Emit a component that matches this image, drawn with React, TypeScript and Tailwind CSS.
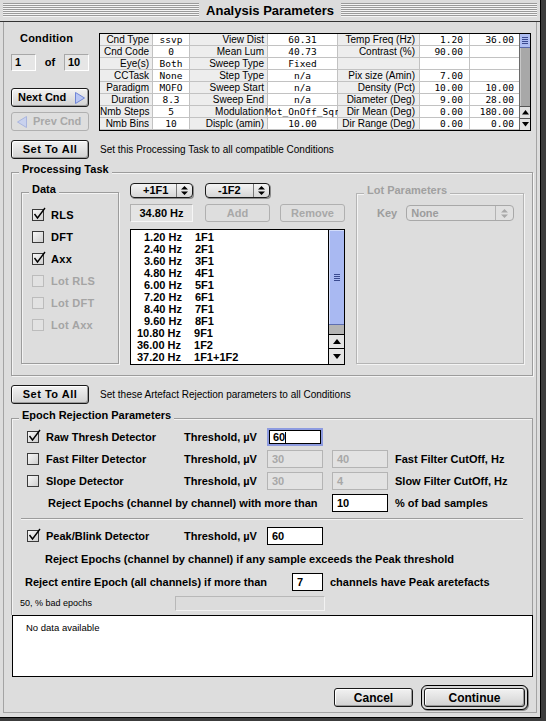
import React from "react";

type Row = [string, string, string, string, string, string, string];
const rows: Row[] = [
  ["Cnd Type", "ssvp", "View Dist", "60.31", "Temp Freq (Hz)", "1.20", "36.00"],
  ["Cnd Code", "0", "Mean Lum", "40.73", "Contrast (%)", "90.00", ""],
  ["Eye(s)", "Both", "Sweep Type", "Fixed", "", "", ""],
  ["CCTask", "None", "Step Type", "n/a", "Pix size (Amin)", "7.00", ""],
  ["Paradigm", "MOFO", "Sweep Start", "n/a", "Density (Pct)", "10.00", "10.00"],
  ["Duration", "8.3", "Sweep End", "n/a", "Diameter (Deg)", "9.00", "28.00"],
  ["Nmb Steps", "5", "Modulation", "Mot_OnOff_Sqr", "Dir Mean (Deg)", "0.00", "180.00"],
  ["Nmb Bins", "10", "Displc (amin)", "10.00", "Dir Range (Deg)", "0.00", "0.00"],
];

const freqs: [string, string, boolean][] = [
  ["1.20 Hz", "1F1", false],
  ["2.40 Hz", "2F1", false],
  ["3.60 Hz", "3F1", false],
  ["4.80 Hz", "4F1", false],
  ["6.00 Hz", "5F1", false],
  ["7.20 Hz", "6F1", false],
  ["8.40 Hz", "7F1", false],
  ["9.60 Hz", "8F1", false],
  ["10.80 Hz", "9F1", true],
  ["36.00 Hz", "1F2", true],
  ["37.20 Hz", "1F1+1F2", true],
];

const btn =
  "border border-[#1a1a1a] rounded-[3px] bg-[linear-gradient(#f2f2f2,#d2d2d2)] shadow-[inset_1px_1px_0_#ffffff,inset_-1px_-1px_0_#9a9a9a] flex items-center justify-center font-bold text-[11px]";
const btnDis =
  "border border-[#b0b0b0] rounded-[3px] bg-[#dedede] flex items-center justify-center font-bold text-[11px] text-[#a8a8a8]";

function Check({ checked, disabled }: { checked?: boolean; disabled?: boolean }) {
  return (
    <div
      className={
        "relative w-[12px] h-[12px] shrink-0 border " +
        (disabled
          ? "border-[#bcbcbc] bg-[#e2e2e2]"
          : "border-[#3a3a3a] bg-[linear-gradient(135deg,#f8f8f8,#cfcfcf)]")
      }
    >
      {checked && (
        <svg className="absolute left-0 top-[-3px] overflow-visible" width="13" height="13" viewBox="0 0 13 13">
          <path d="M1.5 7 L4.5 11 L12 1" stroke="#000" strokeWidth="1.4" fill="none" />
        </svg>
      )}
    </div>
  );
}

function UpDown({ color }: { color: string }) {
  return (
    <svg width="7" height="9" viewBox="0 0 7 9">
      <path d="M3.5 0 L7 3.5 H0 Z M0 5.5 H7 L3.5 9 Z" fill={color} />
    </svg>
  );
}

function Arrow({ up, size }: { up?: boolean; size: number }) {
  return (
    <svg width={size} height={size / 2 + 1} viewBox="0 0 8 5">
      {up ? <path d="M4 0 L8 5 H0 Z" fill="#000" /> : <path d="M0 0 H8 L4 5 Z" fill="#000" />}
    </svg>
  );
}

function Grip() {
  return (
    <div className="flex flex-col gap-[1px]">
      <div className="w-[6px] h-[1px] bg-[#3a4a90]" />
      <div className="w-[6px] h-[1px] bg-[#3a4a90]" />
      <div className="w-[6px] h-[1px] bg-[#3a4a90]" />
      <div className="w-[6px] h-[1px] bg-[#3a4a90]" />
    </div>
  );
}

function Legend({ text, gray }: { text: string; gray?: boolean }) {
  return (
    <span
      className={
        "absolute left-[7px] top-[-10px] px-[3px] bg-[#dddddd] font-bold text-[11px] leading-[12px] " +
        (gray ? "text-[#a0a0a0]" : "text-black")
      }
    >
      {text}
    </span>
  );
}

export default function App() {
  return (
    <div className="w-[546px] h-[721px] bg-[#3c3c3c] overflow-hidden font-['Liberation_Sans',Arial,sans-serif] text-black">
      <div className="w-[541px] h-[718px] bg-[#dddddd] border-r border-b border-black flex flex-col">
        {/* Title bar */}
        <div className="h-[22px] shrink-0 border-b border-[#333333] flex items-start pt-[3px] px-[3px] bg-[#dcdcdc]">
          <div className="flex-1 h-[14px] bg-[repeating-linear-gradient(to_bottom,#9a9a9a_0px,#9a9a9a_1px,#f4f4f4_1px,#f4f4f4_2px)]" />
          <div className="px-[7px] font-bold text-[13px] leading-[15px]">Analysis Parameters</div>
          <div className="flex-1 h-[14px] bg-[repeating-linear-gradient(to_bottom,#9a9a9a_0px,#9a9a9a_1px,#f4f4f4_1px,#f4f4f4_2px)]" />
        </div>

        {/* Panel */}
        <div className="ml-[3px] w-[534px] h-[691px] border-l border-r border-b border-[#a4a4a4] pl-[7px] flex flex-col">
          {/* Top section */}
          <div className="mt-[11px] flex items-start">
            <div className="w-[78px] flex flex-col">
              <div className="pl-[9px] font-bold text-[11px] leading-[10px] tracking-[0.2px]">Condition</div>
              <div className="mt-[11px] h-[17px] flex items-center">
                <div className="w-[25px] h-[17px] bg-[#e6e6e6] border border-t-[#a8a8a8] border-l-[#a8a8a8] border-r-white border-b-white pl-[3px] font-bold text-[11px] leading-[15px]">
                  1
                </div>
                <div className="flex-1 text-center font-bold text-[11px]">of</div>
                <div className="w-[25px] h-[17px] bg-[#e6e6e6] border border-t-[#a8a8a8] border-l-[#a8a8a8] border-r-white border-b-white pl-[3px] font-bold text-[11px] leading-[15px]">
                  10
                </div>
              </div>
              <div className={"mt-[17px] h-[19px] " + btn + " !justify-start pl-[6px]"}>
                <span>Next Cnd</span>
                <svg className="ml-[9px]" width="10" height="12" viewBox="0 0 10 12">
                  <path d="M0.5 0.5 L9.5 6 L0.5 11.5 Z" fill="#b8c6f4" stroke="#7086d6" strokeWidth="1" />
                </svg>
              </div>
              <div className={"mt-[5px] h-[19px] " + btnDis + " !justify-start pl-[5px]"}>
                <svg width="10" height="12" viewBox="0 0 10 12">
                  <path d="M9.5 0.5 L0.5 6 L9.5 11.5 Z" fill="#c9d2ee" stroke="#a9b5de" strokeWidth="1" />
                </svg>
                <span className="ml-[6px]">Prev Cnd</span>
              </div>
            </div>

            {/* Parameter table */}
            <div className="ml-[10px] w-[432px] border border-black flex bg-white">
              <div className="w-[419px] grid grid-cols-[53px_37px_78px_70px_82px_50px_49px] auto-rows-[12px]">
                {rows.map((r, i) => (
                  <React.Fragment key={i}>
                    <div className="h-[12px] bg-[#ededed] border-r border-b border-[#c2c2c2] text-[10px] leading-[11px] text-right pr-[3px] whitespace-nowrap">
                      {r[0]}
                    </div>
                    <div className="h-[12px] bg-white border-r border-b border-[#c2c2c2] font-['DejaVu_Sans_Mono',monospace] text-[9.5px] leading-[11px] flex justify-center whitespace-nowrap">
                      {r[1]}
                    </div>
                    <div className="h-[12px] bg-[#ededed] border-r border-b border-[#c2c2c2] text-[10px] leading-[11px] text-right pr-[3px] whitespace-nowrap">
                      {r[2]}
                    </div>
                    <div className="h-[12px] bg-white border-r border-b border-[#c2c2c2] font-['DejaVu_Sans_Mono',monospace] text-[9.5px] leading-[11px] flex justify-center whitespace-nowrap">
                      {r[3]}
                    </div>
                    <div className="h-[12px] bg-[#ededed] border-r border-b border-[#c2c2c2] text-[10px] leading-[11px] text-right pr-[4px] whitespace-nowrap">
                      {r[4]}
                    </div>
                    <div className="h-[12px] bg-white border-r border-b border-[#c2c2c2] font-['DejaVu_Sans_Mono',monospace] text-[9.5px] leading-[11px] text-right pr-[6px] whitespace-nowrap">
                      {r[5]}
                    </div>
                    <div className="h-[12px] bg-white border-b border-[#c2c2c2] font-['DejaVu_Sans_Mono',monospace] text-[9.5px] leading-[11px] text-right pr-[5px] whitespace-nowrap">
                      {r[6]}
                    </div>
                  </React.Fragment>
                ))}
              </div>
              <div className="w-[11px] border-l border-[#6a6a6a] flex flex-col">
                <div className="h-[14px] bg-[#aebdf2] border-b border-[#5868a8] flex items-center justify-center">
                  <Grip />
                </div>
                <div className="flex-1 bg-[#a8a8a8] border-l border-[#c8c8c8]" />
                <div className="h-[12px] bg-[#e2e2e2] border-t border-[#555555] flex items-center justify-center">
                  <Arrow up size={7} />
                </div>
                <div className="h-[12px] bg-[#e2e2e2] border-t border-[#555555] flex items-center justify-center">
                  <Arrow size={7} />
                </div>
              </div>
            </div>
          </div>

          {/* Set To All 1 */}
          <div className="mt-[9px] flex items-center">
            <div className={"w-[78px] h-[19px] tracking-[0.5px] " + btn}>Set To All</div>
            <div className="ml-[11px] text-[10px]">Set this Processing Task to all compatible Conditions</div>
          </div>

          {/* Processing Task group */}
          <div className="relative mt-[13px] w-[522px] h-[204px] border border-[#9c9c9c] shadow-[1px_1px_0_#f4f4f4,inset_1px_1px_0_#f4f4f4]">
            <Legend text="Processing Task" />
            <div className="flex items-start pt-[10px] pl-[9px]">
              {/* Data */}
              <div className="relative mt-[9px] w-[98px] h-[172px] border border-[#9c9c9c] shadow-[1px_1px_0_#f4f4f4,inset_1px_1px_0_#f4f4f4]">
                <Legend text="Data" />
                <div className="pt-[16px] pl-[10px] flex flex-col gap-[10px]">
                  {[
                    ["RLS", true, false],
                    ["DFT", false, false],
                    ["Axx", true, false],
                    ["Lot RLS", false, true],
                    ["Lot DFT", false, true],
                    ["Lot Axx", false, true],
                  ].map(([t, c, d]) => (
                    <div key={t as string} className="h-[12px] flex items-center gap-[7px]">
                      <Check checked={c as boolean} disabled={d as boolean} />
                      <span className={"font-bold text-[11px] tracking-[0.3px] " + (d ? "text-[#a4a4a4]" : "text-black")}>{t as string}</span>
                    </div>
                  ))}
                </div>
              </div>

              {/* Middle */}
              <div className="ml-[11px] w-[215px] flex flex-col">
                <div className="h-[15px] flex gap-[12px]">
                  <div className="w-[63px] h-[15px] flex items-center border border-[#1a1a1a] rounded-[4px] bg-[linear-gradient(#f4f4f4,#d6d6d6)] shadow-[1px_1px_0_#8a8a8a]">
                    <span className="flex-1 pl-[12px] font-bold text-[11px] leading-[13px]">+1F1</span>
                    <div className="w-[16px] h-full border-l border-[#777777] flex items-center justify-center">
                      <UpDown color="#000" />
                    </div>
                  </div>
                  <div className="w-[65px] h-[15px] flex items-center border border-[#1a1a1a] rounded-[4px] bg-[linear-gradient(#f4f4f4,#d6d6d6)] shadow-[1px_1px_0_#8a8a8a]">
                    <span className="flex-1 pl-[12px] font-bold text-[11px] leading-[13px]">-1F2</span>
                    <div className="w-[16px] h-full border-l border-[#777777] flex items-center justify-center">
                      <UpDown color="#000" />
                    </div>
                  </div>
                </div>
                <div className="mt-[6px] h-[18px] flex">
                  <div className="w-[63px] h-[18px] bg-[#e4e4e4] border border-t-[#b0b0b0] border-l-[#b0b0b0] border-r-[#f6f6f6] border-b-[#f6f6f6] flex items-center justify-center font-bold text-[11px]">
                    34.80 Hz
                  </div>
                  <div className={"ml-[12px] w-[65px] h-[18px] " + btnDis}>Add</div>
                  <div className={"ml-[10px] w-[65px] h-[18px] " + btnDis}>Remove</div>
                </div>
                <div className="mt-[7px] h-[136px] border border-black bg-white flex">
                  <div className="flex-1 pt-[1px]">
                    {freqs.map(([hz, f, long]) => (
                      <div key={f} className="h-[12px] flex items-center font-bold text-[11px] leading-[12px] whitespace-nowrap">
                        <span className={long ? "pl-[6px]" : "pl-[13px]"}>{hz}</span>
                        <span className="ml-[13px]">{f}</span>
                      </div>
                    ))}
                  </div>
                  <div className="w-[16px] border-l border-black flex flex-col">
                    <div className="h-[95px] bg-[#a9b9f2] border-b border-[#5e6eb0] flex items-center justify-center shadow-[inset_1px_1px_0_#d2dcfa]">
                      <Grip />
                    </div>
                    <div className="h-[9px] bg-[#b4b4b4]" />
                    <div className="h-[14px] bg-[#e4e4e4] border-t border-black flex items-center justify-center">
                      <Arrow up size={8} />
                    </div>
                    <div className="flex-1 bg-[#e4e4e4] border-t border-black flex items-center justify-center">
                      <Arrow size={8} />
                    </div>
                  </div>
                </div>
              </div>

              {/* Lot Parameters */}
              <div className="relative ml-[11px] mt-[10px] w-[168px] h-[171px] border border-[#b4b4b4] shadow-[1px_1px_0_#f4f4f4,inset_1px_1px_0_#f4f4f4]">
                <Legend text="Lot Parameters" gray />
                <div className="pt-[11px] pl-[20px] flex items-center">
                  <span className="font-bold text-[11px] text-[#9c9c9c]">Key</span>
                  <div className="ml-[9px] w-[108px] h-[16px] flex items-center border border-[#a8a8a8] rounded-[4px] bg-[#e0e0e0]">
                    <span className="flex-1 pl-[4px] font-bold text-[11px] leading-[14px] text-[#9c9c9c]">None</span>
                    <div className="w-[18px] h-full border-l border-[#b4b4b4] flex items-center justify-center">
                      <UpDown color="#a8a8a8" />
                    </div>
                  </div>
                </div>
              </div>
            </div>
          </div>

          {/* Set To All 2 */}
          <div className="mt-[9px] flex items-center">
            <div className={"w-[78px] h-[19px] tracking-[0.5px] " + btn}>Set To All</div>
            <div className="ml-[11px] text-[10px]">Set these Artefact Rejection parameters to all Conditions</div>
          </div>

          {/* Epoch Rejection group */}
          <div className="relative mt-[14px] w-[522px] h-[197px] border-t border-l border-r border-[#9c9c9c] shadow-[inset_1px_1px_0_#f4f4f4]">
            <Legend text="Epoch Rejection Parameters" />
            <div className="pt-[9px] flex flex-col">
              {/* Raw */}
              <div className="h-[18px] flex items-center pl-[15px]">
                <Check checked />
                <span className="ml-[7px] w-[138px] font-bold text-[11px]">Raw Thresh Detector</span>
                <span className="w-[83px] font-bold text-[11px]">Threshold, µV</span>
                <div className="w-[56px] h-[18px] bg-white border-2 border-[#8d9be0] shadow-[inset_0_0_0_1px_#000] flex items-center pl-[4px] font-bold text-[11px]">
                  60<span className="w-[1px] h-[11px] bg-black" />
                </div>
              </div>
              {/* Fast */}
              <div className="mt-[4px] h-[18px] flex items-center pl-[15px]">
                <Check />
                <span className="ml-[7px] w-[138px] font-bold text-[11px]">Fast Filter Detector</span>
                <span className="w-[83px] font-bold text-[11px]">Threshold, µV</span>
                <div className="w-[56px] h-[18px] bg-[#e2e2e2] border border-[#b4b4b4] flex items-center pl-[4px] font-bold text-[11px] text-[#a8a8a8]">30</div>
                <div className="ml-[9px] w-[56px] h-[18px] bg-[#e2e2e2] border border-[#b4b4b4] flex items-center pl-[4px] font-bold text-[11px] text-[#a8a8a8]">40</div>
                <span className="ml-[7px] font-bold text-[11px]">Fast Filter CutOff, Hz</span>
              </div>
              {/* Slope */}
              <div className="mt-[4px] h-[18px] flex items-center pl-[15px]">
                <Check />
                <span className="ml-[7px] w-[138px] font-bold text-[11px]">Slope Detector</span>
                <span className="w-[83px] font-bold text-[11px]">Threshold, µV</span>
                <div className="w-[56px] h-[18px] bg-[#e2e2e2] border border-[#b4b4b4] flex items-center pl-[4px] font-bold text-[11px] text-[#a8a8a8]">30</div>
                <div className="ml-[9px] w-[56px] h-[18px] bg-[#e2e2e2] border border-[#b4b4b4] flex items-center pl-[4px] font-bold text-[11px] text-[#a8a8a8]">4</div>
                <span className="ml-[7px] font-bold text-[11px]">Slow Filter CutOff, Hz</span>
              </div>
              {/* Reject % */}
              <div className="mt-[4px] h-[18px] flex items-center pl-[36px]">
                <span className="w-[284px] font-bold text-[11px] whitespace-nowrap">Reject Epochs (channel by channel) with more than</span>
                <div className="w-[56px] h-[18px] bg-white border border-black flex items-center pl-[4px] font-bold text-[11px]">10</div>
                <span className="ml-[7px] font-bold text-[11px]">% of bad samples</span>
              </div>
              {/* separator */}
              <div className="mt-[6px] mx-[9px] h-[2px] border-t border-[#9c9c9c] border-b border-b-[#f4f4f4]" />
              {/* Peak */}
              <div className="mt-[7px] h-[18px] flex items-center pl-[15px]">
                <Check checked />
                <span className="ml-[7px] w-[138px] font-bold text-[11px]">Peak/Blink Detector</span>
                <span className="w-[83px] font-bold text-[11px]">Threshold, µV</span>
                <div className="w-[56px] h-[18px] bg-white border border-black flex items-center pl-[4px] font-bold text-[11px]">60</div>
              </div>
              <div className="mt-[8px] h-[12px] pl-[33px] font-bold text-[11px] leading-[12px] whitespace-nowrap">
                Reject Epochs (channel by channel) if any sample exceeds the Peak threshold
              </div>
              <div className="mt-[8px] h-[18px] flex items-center pl-[13px]">
                <span className="w-[267px] font-bold text-[11px] whitespace-nowrap">Reject entire Epoch (all channels) if more than</span>
                <div className="w-[31px] h-[18px] bg-white border border-black flex items-center pl-[4px] font-bold text-[11px]">7</div>
                <span className="ml-[7px] font-bold text-[11px]">channels have Peak aretefacts</span>
              </div>
              <div className="mt-[5px] h-[15px] flex items-center pl-[8px]">
                <span className="w-[155px] text-[9px]">50, % bad epochs</span>
                <div className="w-[150px] h-[15px] bg-[#dcdcdc] border border-t-[#b8b8b8] border-l-[#b8b8b8] border-r-[#f2f2f2] border-b-[#f2f2f2]" />
              </div>
            </div>
          </div>

          {/* Text box */}
          <div className="ml-[1px] w-[521px] h-[62px] bg-white border border-black pt-[5px] pl-[13px] text-[9.5px]">
            No data available
          </div>

          {/* Buttons */}
          <div className="mt-[8px] w-[517px] flex items-center justify-end">
            <div className={"w-[79px] h-[19px] " + btn + " !text-[12px]"}>Cancel</div>
            <div className="ml-[8px] w-[107px] h-[25px] border border-black rounded-[6px] p-[2px] bg-[#d6d6d6] shadow-[1px_1px_0_#8a8a8a]">
              <div className={"w-full h-full " + btn + " !text-[12px]"}>Continue</div>
            </div>
          </div>
        </div>
      </div>
    </div>
  );
}
